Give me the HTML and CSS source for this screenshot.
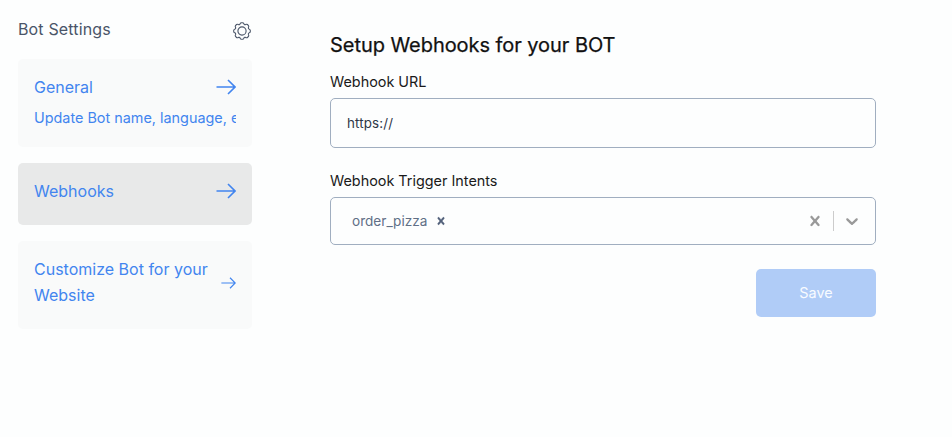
FILE: index.html
```html
<!DOCTYPE html>
<html lang="en">
<head>
<meta charset="utf-8">
<title>Bot Settings</title>
<link rel="stylesheet" href="styles.css">
</head>
<body>
<div class="layout">
  <aside class="sidebar">
    <header class="sidebar-head">
      <span>Bot Settings</span>
      <svg class="gear" viewBox="0 0 18 18"><path d="M7.2 1.7 Q7.5.7 8.5.7 H9.5 Q10.5.7 10.8 1.7 Q11.2 3 12.5 2.6 Q13.8 1.9 14.4 2.5 L15.5 3.6 Q16.1 4.2 15.4 5.5 Q15 6.8 16.3 7.2 Q17.3 7.5 17.3 8.5 V9.5 Q17.3 10.5 16.3 10.8 Q15 11.2 15.4 12.5 Q16.1 13.8 15.5 14.4 L14.4 15.5 Q13.8 16.1 12.5 15.4 Q11.2 15 10.8 16.3 Q10.5 17.3 9.5 17.3 H8.5 Q7.5 17.3 7.2 16.3 Q6.8 15 5.5 15.4 Q4.2 16.1 3.6 15.5 L2.5 14.4 Q1.9 13.8 2.6 12.5 Q3 11.2 1.7 10.8 Q.7 10.5.7 9.5 V8.5 Q.7 7.5 1.7 7.2 Q3 6.8 2.6 5.5 Q1.9 4.2 2.5 3.6 L3.6 2.5 Q4.2 1.9 5.5 2.6 Q6.8 3 7.2 1.7Z"/><circle cx="9" cy="9" r="4.1"/></svg>
    </header>
    <nav class="menu">
      <a class="card">
        <div class="card-row"><span>General</span><svg class="arrow" viewBox="0 0 20 16"><path d="M.5 8H19M12 1L19 8L12 15"/></svg></div>
        <div class="card-note">Update Bot name, language, etc</div>
      </a>
      <a class="card active">
        <div class="card-row"><span>Webhooks</span><svg class="arrow" viewBox="0 0 20 16"><path d="M.5 8H19M12 1L19 8L12 15"/></svg></div>
      </a>
      <a class="card">
        <div class="card-row"><span>Customize Bot for your Website</span><svg class="arrow small" viewBox="0 0 20 16"><path d="M.5 8H19M12 1L19 8L12 15"/></svg></div>
      </a>
    </nav>
  </aside>
  <main class="content">
    <h1>Setup Webhooks for your BOT</h1>
    <label class="label" for="url">Webhook URL</label>
    <input class="field" id="url" type="text" value="https://">
    <div class="label intents-label">Webhook Trigger Intents</div>
    <div class="select">
      <span class="tag">order_pizza</span>
      <svg class="tag-x" viewBox="0 0 20 20"><path d="M14.348 14.849c-0.469 0.469-1.229 0.469-1.697 0l-2.651-3.030-2.651 3.029c-0.469 0.469-1.229 0.469-1.697 0-0.469-0.469-0.469-1.229 0-1.697l2.758-3.15-2.759-3.152c-0.469-0.469-0.469-1.228 0-1.697s1.228-0.469 1.697 0l2.652 3.031 2.651-3.031c0.469-0.469 1.228-0.469 1.697 0s0.469 1.229 0 1.697l-2.758 3.152 2.758 3.15c0.469 0.469 0.469 1.229 0 1.698z"/></svg>
      <div class="controls">
        <svg class="control" viewBox="0 0 20 20"><path d="M14.348 14.849c-0.469 0.469-1.229 0.469-1.697 0l-2.651-3.030-2.651 3.029c-0.469 0.469-1.229 0.469-1.697 0-0.469-0.469-0.469-1.229 0-1.697l2.758-3.15-2.759-3.152c-0.469-0.469-0.469-1.228 0-1.697s1.228-0.469 1.697 0l2.652 3.031 2.651-3.031c0.469-0.469 1.228-0.469 1.697 0s0.469 1.229 0 1.697l-2.758 3.152 2.758 3.15c0.469 0.469 0.469 1.229 0 1.698z"/></svg>
        <span class="divider"></span>
        <svg class="control" viewBox="0 0 20 20"><path d="M4.516 7.548c0.436-0.446 1.043-0.481 1.576 0l3.908 3.747 3.908-3.747c0.533-0.481 1.141-0.446 1.574 0 0.436 0.445 0.408 1.197 0 1.615-0.406 0.418-4.695 4.502-4.695 4.502-0.217 0.223-0.502 0.335-0.787 0.335s-0.57-0.112-0.789-0.335c0 0-4.287-4.084-4.695-4.502s-0.436-1.17 0-1.615z"/></svg>
      </div>
    </div>
    <button class="save" type="button">Save</button>
  </main>
</div>
</body>
</html>
```
FILE: styles.css
```css
* { box-sizing: border-box; }
body {
  margin: 0;
  min-height: 437px;
  background: #fdfefe;
  font: 16px/26px Inter, "Liberation Sans", sans-serif;
  color: #1a202c;
}
.layout { display: flex; gap: 78px; padding-left: 18px; }
.sidebar { width: 234px; padding-top: 16px; }
.sidebar-head {
  display: flex;
  justify-content: space-between;
  align-items: center;
  height: 26px;
  letter-spacing: .15px;
  color: #4a5568;
}
.gear {
  width: 18px;
  height: 18px;
  margin: 3px 1px 0 0;
  fill: none;
  stroke: #4a5568;
  stroke-width: 1.1;
}
.menu { display: flex; flex-direction: column; gap: 16px; margin-top: 17px; }
.card {
  padding: 15px 16px 21px;
  border-radius: 5px;
  background: #f9fafa;
  color: #4285ef;
}
.card.active { background: #e8e9e9; }
.card-row { display: flex; justify-content: space-between; align-items: center; }
.card-note {
  height: 26px;
  padding-top: 6px;
  font-size: 14.4px;
  line-height: 24px;
  white-space: nowrap;
  overflow: hidden;
}
.arrow {
  flex: none;
  width: 20px;
  height: 16px;
  fill: none;
  stroke: currentColor;
  stroke-width: 1.6;
}
.arrow.small { width: 15px; height: 12px; margin-top: 2px; }
.content { width: 546px; padding-top: 31px; }
h1 {
  margin: 0;
  font-size: 20px;
  line-height: 29px;
  font-weight: 400;
  letter-spacing: -.05px;
  -webkit-text-stroke: .25px #111;
  color: #111;
}
.label {
  display: block;
  margin-top: 11px;
  font-size: 14.4px;
  line-height: 22px;
  color: #1a1a1a;
}
.field {
  display: block;
  width: 100%;
  height: 50px;
  margin-top: 5px;
  padding: 0 16px;
  border: 1px solid #a0aec0;
  border-radius: 5px;
  background: transparent;
  font: 13.333px Inter, sans-serif;
  letter-spacing: .15px;
  color: #2d3748;
}
.intents-label { margin-top: 22px; }
.select {
  display: flex;
  align-items: center;
  height: 48px;
  margin-top: 5px;
  padding-left: 21px;
  border: 1px solid #a0aec0;
  border-radius: 5px;
}
.tag { font-size: 13.6px; color: #606f86; }
.tag-x { width: 14px; height: 14px; margin-left: 7px; fill: #52617a; stroke: #52617a; stroke-width: .6; }
.controls { display: flex; align-items: center; margin-left: auto; }
.control { width: 20px; height: 20px; margin: 0 8px; fill: #999; }
.divider { width: 1px; height: 20px; background: #ccc; }
.controls .control:last-child { margin-right: 13px; }
.save {
  display: block;
  width: 120px;
  height: 48px;
  margin: 24px 0 0 auto;
  padding: 0 6px 2px;
  border: 0;
  border-radius: 5px;
  background: #b0ccf7;
  color: #f8fbff;
  font: 14.4px Inter, sans-serif;
}
```
